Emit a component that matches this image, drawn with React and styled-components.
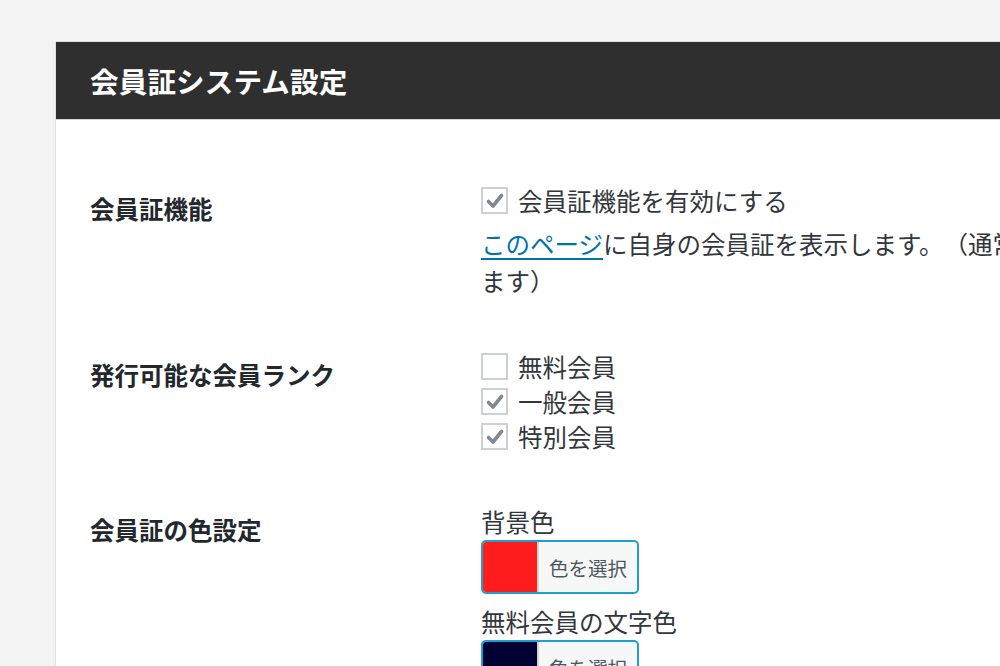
import React from 'react';
import styled, { createGlobalStyle } from 'styled-components';

const GlobalStyle = createGlobalStyle`
  html, body {
    margin: 0;
    padding: 0;
    background: #f3f3f3;
    overflow: hidden;
  }
  body {
    font-family: "Noto Sans CJK JP", "Noto Sans", sans-serif;
    text-spacing-trim: space-all;
  }
`;

function App() {
  return (
    <>
      <GlobalStyle />
      <Page>
        <Panel>
          <Header>
            <Title>会員証システム設定</Title>
          </Header>
          <Body>
            <Row>
              <Label>会員証機能</Label>
              <Field>
                <CheckRow checked>会員証機能を有効にする</CheckRow>
                <Description>
                  <Link href="#">このページ</Link>に自身の会員証を表示します。（通常は自動で作成され
                  <br />
                  ます）
                </Description>
              </Field>
            </Row>
            <Row>
              <Label>発行可能な会員ランク</Label>
              <Field>
                <CheckRow>無料会員</CheckRow>
                <CheckRow checked>一般会員</CheckRow>
                <CheckRow checked>特別会員</CheckRow>
              </Field>
            </Row>
            <Row>
              <Label>会員証の色設定</Label>
              <Field>
                <ColorLabel>背景色</ColorLabel>
                <ColorPicker color="#ff1c1c" />
                <ColorLabel spaced>無料会員の文字色</ColorLabel>
                <ColorPicker color="#000033" />
              </Field>
            </Row>
          </Body>
        </Panel>
      </Page>
    </>
  );
}

function CheckRow({ checked, children }) {
  return (
    <CheckLine>
      <Box>
        {checked && (
          <svg width="20" height="20" viewBox="0 0 20 20">
            <polyline
              points="3.5,10.5 8,15 16.5,4.5"
              fill="none"
              stroke="#7e8993"
              strokeWidth="3.6"
              strokeLinecap="round"
              strokeLinejoin="round"
            />
          </svg>
        )}
      </Box>
      <span>{children}</span>
    </CheckLine>
  );
}

function ColorPicker({ color }) {
  return (
    <PickerButton type="button">
      <Swatch style={{ background: color }} />
      <PickerText>色を選択</PickerText>
    </PickerButton>
  );
}

export default App;

// Styled Components
const Page = styled.div`
  padding: 41px 0 0 55px;
  height: 666px;
  box-sizing: border-box;
`;

const Panel = styled.div`
  width: 945px;
  height: 625px;
  overflow: hidden;
  background: #fff;
  border: 1px solid #e2e2e2;
  border-right: none;
  border-bottom: none;
`;

const Header = styled.div`
  height: 77px;
  background: #2f2f2f;
  border-bottom: 1px solid #d8d8d8;
  display: flex;
  align-items: center;
  padding-left: 34px;
`;

const Title = styled.h1`
  margin: 0;
  color: #fff;
  font-size: 28.5px;
  font-weight: 700;
  letter-spacing: 0.2px;
`;

const Body = styled.div`
  padding: 63px 0 0 34px;
  display: flex;
  flex-direction: column;
  gap: 50px;
`;

const Row = styled.div`
  display: grid;
  grid-template-columns: 391px 1fr;
`;

const Label = styled.div`
  padding-top: 8px;
  font-size: 24.5px;
  line-height: 35px;
  font-weight: 700;
  color: #23282d;
  white-space: nowrap;
`;

const Field = styled.div`
  font-size: 24.5px;
  color: #32373c;
  display: flex;
  flex-direction: column;
  align-items: flex-start;
  min-width: 0;
`;

const CheckLine = styled.label`
  display: flex;
  align-items: center;
  gap: 10px;
  height: 35px;
  line-height: 35px;
  white-space: nowrap;
`;

const Box = styled.span`
  width: 27px;
  height: 27px;
  box-sizing: border-box;
  border: 2px solid #cdd0d4;
  background: #fff;
  display: flex;
  align-items: center;
  justify-content: center;
  flex-shrink: 0;
`;

const Description = styled.p`
  margin: 7px 0 0;
  line-height: 37px;
  white-space: nowrap;
`;

const Link = styled.a`
  color: #0073aa;
  text-decoration: underline;
  text-underline-offset: 4px;
`;

const ColorLabel = styled.div`
  line-height: 35px;
  margin-top: ${({ spaced }) => (spaced ? '10px' : '0')};
  white-space: nowrap;
`;

const PickerButton = styled.button`
  display: flex;
  align-items: stretch;
  width: 158px;
  height: 54px;
  padding: 0;
  margin: 1px 0 0;
  border: 2px solid #1e9fd4;
  border-radius: 5px;
  background: #f6f7f7;
  overflow: hidden;
  cursor: pointer;
  font-family: inherit;
`;

const Swatch = styled.span`
  width: 54px;
  border-right: 2px solid #d3d3d3;
`;

const PickerText = styled.span`
  flex: 1;
  display: flex;
  align-items: center;
  justify-content: center;
  font-size: 19.5px;
  color: #50575e;
`;
